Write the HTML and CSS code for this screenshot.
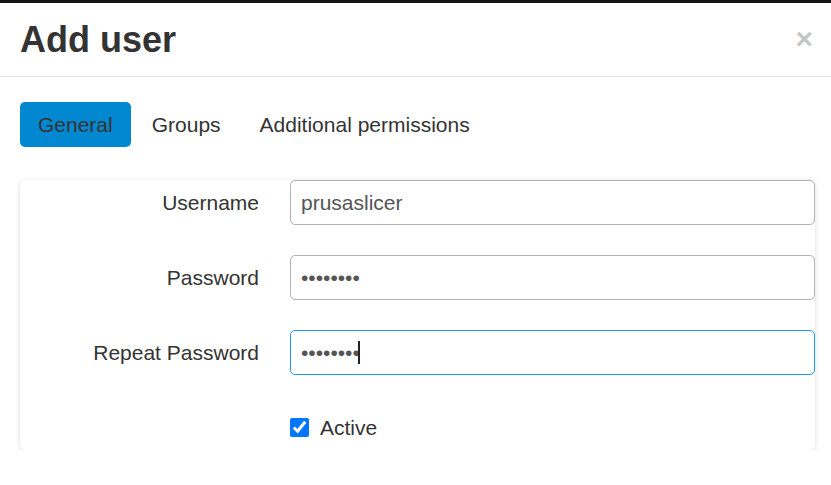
FILE: index.html
```html
<!DOCTYPE html>
<html>
    <head>
        <link rel="stylesheet" href="styles.css">
    </head>
    <body>
        <div class="topbar"></div>
        <div class="modal-header">
            <h1 class="modal-title">Add user</h1>
            <button class="close" type="button">&times;</button>
        </div>
        <div class="modal-body">
            <ul class="tabs">
                <li class="tab active">General</li>
                <li class="tab">Groups</li>
                <li class="tab">Additional permissions</li>
            </ul>
            <form class="panel">
                <label class="field-label" for="username">Username</label>
                <input class="field" id="username" type="text" value="prusaslicer">

                <label class="field-label" for="password">Password</label>
                <input class="field" id="password" type="password" value="abcdefgh">

                <label class="field-label" for="repeat">Repeat Password</label>
                <div class="field-wrap">
                    <input class="field focused" id="repeat" type="password" value="abcdefgh">
                    <span class="caret"></span>
                </div>

                <div></div>
                <div class="check-row">
                    <input class="check" id="active" type="checkbox" checked>
                    <label for="active">Active</label>
                </div>
            </form>
        </div>
    </body>
</html>
```

FILE: styles.css
```css
body{
    margin: 0;
    background: #fff;
    color: #333;
    font-family: "Liberation Sans", Arial, sans-serif;
    font-size: 21px;
}
.topbar{
    height: 3px;
    background-color: #161616;
}
.modal-header{
    display: flex;
    justify-content: space-between;
    align-items: flex-start;
    padding: 17px 18px 16px 20px;
    border-bottom: 1px solid #e5e5e5;
}
.modal-title{
    margin: 0;
    font-size: 36px;
    line-height: 40px;
    font-weight: bold;
    color: #333;
}
.close{
    margin-top: 4px;
    padding: 0;
    border: none;
    background: none;
    font-family: "Liberation Sans", Arial, sans-serif;
    font-size: 30px;
    line-height: 30px;
    font-weight: bold;
    color: #c6c6c6;
}
.modal-body{
    padding: 25px 16px 0 20px;
}
.tabs{
    display: flex;
    gap: 3px;
    margin: 0;
    padding: 0;
    list-style: none;
}
.tab{
    height: 45px;
    line-height: 45px;
    padding: 0 18px;
    border-radius: 5px;
    color: #333;
}
.tab.active{
    background-color: #0288d1;
}
.panel{
    display: grid;
    grid-template-columns: 239px 1fr;
    column-gap: 31px;
    row-gap: 30px;
    margin-top: 33px;
    background: #fff;
    border-radius: 5px;
    box-shadow: 0 1px 5px rgba(0, 0, 0, 0.15);
}
.field-label{
    align-self: center;
    text-align: right;
}
.field-wrap{
    position: relative;
}
.field{
    box-sizing: border-box;
    width: 100%;
    height: 45px;
    margin: 0;
    padding: 0 10px;
    border: 1px solid #b3b3b3;
    border-radius: 5px;
    font-family: "Liberation Sans", Arial, sans-serif;
    font-size: 21px;
    color: #555;
    outline: none;
}
.field.focused{
    border-color: #2196f3;
}
.caret{
    position: absolute;
    left: 68px;
    top: 11px;
    width: 2px;
    height: 23px;
    background-color: #222;
}
.check-row{
    display: flex;
    align-items: center;
    height: 45px;
}
.check{
    width: 19px;
    height: 19px;
    margin: 0 11px 0 0;
    accent-color: #0075ff;
}
```
